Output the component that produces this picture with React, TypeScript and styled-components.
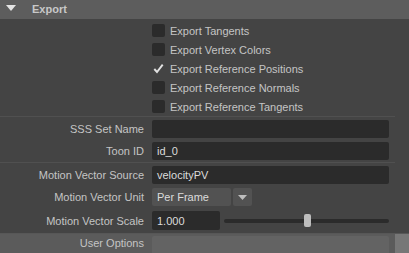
import React from 'react';
import styled, { createGlobalStyle } from 'styled-components';

const GlobalStyle = createGlobalStyle`
  html, body {
    margin: 0;
    padding: 0;
    background: #444444;
  }
  body {
    font-family: 'Liberation Sans', Arial, sans-serif;
    font-size: 11px;
    color: #c4c4c4;
  }
`;

const checks = [
  { label: 'Export Tangents', checked: false },
  { label: 'Export Vertex Colors', checked: false },
  { label: 'Export Reference Positions', checked: true },
  { label: 'Export Reference Normals', checked: false },
  { label: 'Export Reference Tangents', checked: false },
];

const App = () => {
  return (
    <>
      <GlobalStyle />
      <Panel>
        <Header>
          <Caret />
          <HeaderTitle>Export</HeaderTitle>
        </Header>

        <CheckGroup>
          {checks.map((c) => (
            <CheckRow key={c.label}>
              <Box $checked={c.checked}>
                {c.checked && (
                  <svg width="13" height="13" viewBox="0 0 13 13">
                    <path d="M2.3 7 L5 10 L10.7 2.6" fill="none" stroke="#e2e2e2" strokeWidth="1.9" />
                  </svg>
                )}
              </Box>
              <CheckLabel>{c.label}</CheckLabel>
            </CheckRow>
          ))}
        </CheckGroup>

        <Separator />

        <FieldGroup>
          <FieldRow>
            <Label>SSS Set Name</Label>
            <TextField />
          </FieldRow>
          <FieldRow>
            <Label>Toon ID</Label>
            <TextField>id_0</TextField>
          </FieldRow>
        </FieldGroup>

        <Separator />

        <FieldGroup $top={3}>
          <FieldRow>
            <Label>Motion Vector Source</Label>
            <TextField>velocityPV</TextField>
          </FieldRow>
          <FieldRow>
            <Label>Motion Vector Unit</Label>
            <Dropdown>
              <DropValue>Per Frame</DropValue>
              <DropArrow>
                <svg width="9" height="5" viewBox="0 0 9 5">
                  <path d="M0 0 H9 L4.5 5 Z" fill="#bdbdbd" />
                </svg>
              </DropArrow>
            </Dropdown>
          </FieldRow>
          <FieldRow $gapTop={5}>
            <Label>Motion Vector Scale</Label>
            <SliderWrap>
              <NumField>1.000</NumField>
              <Track>
                <Handle style={{ left: `${(84 / 167) * 100}%` }} />
              </Track>
            </SliderWrap>
          </FieldRow>
        </FieldGroup>

        <UserOptions>
          <UserMain>
            <Label>User Options</Label>
            <UserField />
          </UserMain>
          <UserTail />
        </UserOptions>
      </Panel>
    </>
  );
};

const Panel = styled.div`
  width: 409px;
  height: 253px;
  overflow: hidden;
  background: #444444;
  display: flex;
  flex-direction: column;
`;

const Header = styled.div`
  height: 19px;
  flex-shrink: 0;
  background: #5d5d5d;
  display: flex;
  align-items: center;
`;

const Caret = styled.div`
  width: 0;
  height: 0;
  margin-left: 6px;
  margin-top: -4px;
  border-left: 5.5px solid transparent;
  border-right: 5.5px solid transparent;
  border-top: 6px solid #e4e4e4;
`;

const HeaderTitle = styled.span`
  margin-left: 16px;
  font-weight: bold;
  color: #c8c8c8;
  margin-top: -1px;
`;

const CheckGroup = styled.div`
  padding: 2px 0 0 152px;
  display: flex;
  flex-direction: column;
`;

const CheckRow = styled.div`
  height: 19px;
  display: flex;
  align-items: center;
`;

const Box = styled.div<{ $checked?: boolean }>`
  width: 13px;
  height: 13px;
  border-radius: 2px;
  background: ${(p) => (p.$checked ? 'transparent' : '#2b2b2b')};
  display: flex;
`;

const CheckLabel = styled.span`
  margin-left: 5px;
`;

const Separator = styled.div`
  height: 1px;
  width: 395px;
  background: #505050;
  flex-shrink: 0;
`;

const FieldGroup = styled.div<{ $top?: number }>`
  padding: ${(p) => p.$top ?? 3}px 0 2px 0;
  display: flex;
  flex-direction: column;
  gap: 4px;
`;

const FieldRow = styled.div<{ $gapTop?: number }>`
  height: 18px;
  display: grid;
  grid-template-columns: 144px 1fr;
  column-gap: 8px;
  align-items: center;
  padding-right: 20px;
  margin-top: ${(p) => (p.$gapTop ? p.$gapTop - 4 : 0)}px;
`;

const Label = styled.span`
  text-align: right;
  white-space: nowrap;
`;

const TextField = styled.div`
  height: 18px;
  background: #2b2b2b;
  border-radius: 2px;
  color: #dcdcdc;
  padding-left: 5px;
  display: flex;
  align-items: center;
`;

const Dropdown = styled.div`
  display: flex;
  gap: 2px;
  height: 18px;
`;

const DropValue = styled.div`
  width: 74px;
  background: #525252;
  border-radius: 2px;
  color: #dcdcdc;
  padding-left: 5px;
  display: flex;
  align-items: center;
`;

const DropArrow = styled.div`
  width: 19px;
  background: #525252;
  border-radius: 2px;
  display: flex;
  align-items: center;
  justify-content: center;
`;

const SliderWrap = styled.div`
  display: flex;
  align-items: center;
  gap: 4px;
  height: 19px;
`;

const NumField = styled(TextField)`
  width: 63px;
  height: 19px;
  flex-shrink: 0;
`;

const Track = styled.div`
  position: relative;
  flex: 1;
  height: 4px;
  border-radius: 2px;
  background: #2b2b2b;
`;

const Handle = styled.div`
  position: absolute;
  top: -5px;
  width: 7px;
  height: 13px;
  margin-left: -3px;
  border-radius: 2px;
  background: #bdbdbd;
`;

const UserOptions = styled.div`
  margin-top: 2px;
  flex: 1;
  display: flex;
  border-top: 1px solid #575757;
`;

const UserMain = styled.div`
  flex: 1;
  background: #5b5b5b;
  display: grid;
  grid-template-columns: 144px 1fr;
  column-gap: 8px;
  align-items: start;
  padding: 1px 6px 0 0;
  line-height: 16px;
`;

const UserField = styled.div`
  height: 19px;
  margin-top: 1px;
  background: #636363;
  border-radius: 2px;
`;

const UserTail = styled.div`
  width: 14px;
  background: #777777;
`;

export default App;
